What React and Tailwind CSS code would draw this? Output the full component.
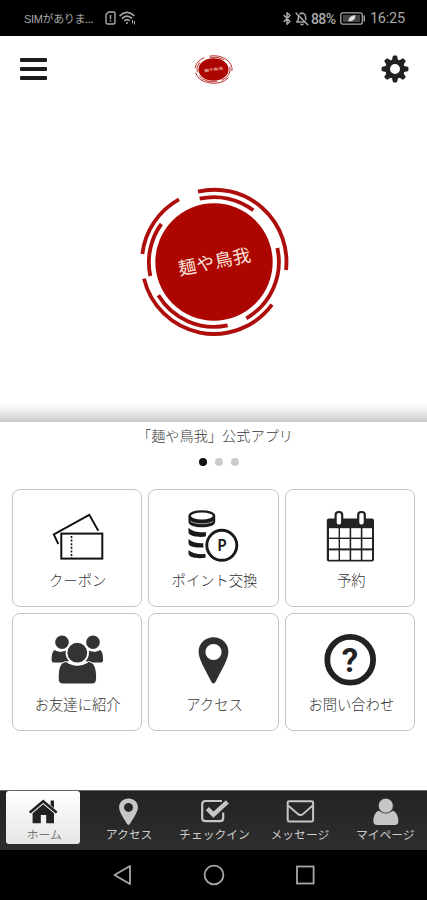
import React, { useState } from "react";
import { LuBluetooth, LuBellOff } from "react-icons/lu";

const rings = [
  // outer
  "M-48 -211 A216 216 0 0 1 216 24",
  "M-105 -188 A216 216 0 0 0 -215 -24",
  "M-210 50 A216 216 0 0 0 174 128",
  // inner
  "M-43 -190 A195 195 0 0 1 118 -155",
  "M-158 -114 A195 195 0 0 0 -191 42",
  "M190 -42 A195 195 0 0 1 97 169",
  "M-167 100 A195 195 0 0 0 41 190",
];

const ShopLogo = ({ className }) => (
  <svg
    viewBox="-228 -228 456 456"
    preserveAspectRatio="none"
    className={className}
  >
    <circle r="176" fill="#ad0500" />
    <g fill="none" stroke="#ad0e0c" strokeWidth="11.5">
      {rings.map((d) => (
        <path key={d} d={d} />
      ))}
    </g>
    <text
      transform="rotate(-11.5)"
      x="2"
      y="19"
      textAnchor="middle"
      fill="#fbe3dc"
      fontSize="54"
      letterSpacing="1.5"
      className="font-['Liberation_Serif','Noto_Sans_CJK_JP',serif]"
    >
      麺や鳥我
    </text>
  </svg>
);

const teeth = [0, 45, 90, 135, 180, 225, 270, 315];

const GearIcon = () => (
  <svg viewBox="-14 -14 28 28" className="size-7">
    <g fill="#222">
      {teeth.map((deg) => (
        <path
          key={deg}
          transform={`rotate(${deg})`}
          d="M-3.2 -8 L-2.2 -12.6 Q-2 -13.4 -1.2 -13.4 H1.2 Q2 -13.4 2.2 -12.6 L3.2 -8 Z"
        />
      ))}
    </g>
    <circle r="7.4" fill="none" stroke="#222" strokeWidth="4.8" />
  </svg>
);

const CouponIcon = () => (
  <svg viewBox="0 0 56 56" className="size-14" fill="none" stroke="#111">
    <path d="M9.3 36 L4.8 26.5 L40.3 6.8 L49.3 22.7" strokeWidth="1.9" />
    <rect x="12.3" y="25.6" width="41" height="25" strokeWidth="2" />
    <path d="M22.5 28 V50" strokeWidth="1.6" strokeDasharray="2 1.6" />
  </svg>
);

const PointIcon = () => (
  <svg viewBox="0 0 56 56" className="size-14">
    <path d="M3.5 8.5 V14 C3.5 21 30.2 21 30.2 14 V8.5 Z" fill="#1a1a1a" />
    <ellipse
      cx="16.85"
      cy="8"
      rx="12.2"
      ry="4.6"
      fill="#fff"
      stroke="#1a1a1a"
      strokeWidth="2.4"
    />
    <path
      d="M5.5 13.2 C10 16.6 23.7 16.6 28.2 13.2"
      fill="none"
      stroke="#fff"
      strokeWidth=".6"
    />
    <g fill="#1a1a1a">
      <path d="M3.5 19.8 C7 23.6 14 24.8 21 24.2 V28.5 C14 29.6 3.5 28.6 3.5 24 Z" />
      <path d="M3.5 31 C7 34.6 13 35.6 19 35.2 V39.4 C12 40 3.5 39.4 3.5 35 Z" />
      <path d="M3.5 42 C7 45.4 14 46.6 20.5 46 V49.8 C13 51 3.5 50 3.5 45.6 Z" />
    </g>
    <circle cx="36.8" cy="37.3" r="18.5" fill="#fff" />
    <circle
      cx="36.8"
      cy="37.3"
      r="15"
      fill="#fff"
      stroke="#1a1a1a"
      strokeWidth="2.9"
    />
    <text
      x="37"
      y="43"
      textAnchor="middle"
      fontSize="15.5"
      fill="#1a1a1a"
      className="font-['Noto_Sans',sans-serif] font-semibold"
    >
      P
    </text>
  </svg>
);

const CalendarIcon = () => (
  <svg viewBox="0 0 56 56" className="size-14">
    <rect x="4.8" y="10.5" width="47.2" height="43" rx="2" fill="#222" />
    <g fill="#fff">
      {[20.2, 31, 42.4].map((y) =>
        [7, 18, 29.2, 40.4].map((x) => (
          <rect key={`${x}-${y}`} x={x} y={y} width="9.6" height="9.4" />
        ))
      )}
    </g>
    <g fill="#fff" stroke="#222" strokeWidth="2.2">
      <rect x="13.6" y="4" width="6.6" height="13.5" rx="3" />
      <rect x="36.2" y="4" width="6.6" height="13.5" rx="3" />
    </g>
  </svg>
);

const FriendsIcon = () => (
  <svg viewBox="0 0 56 56" className="size-14" fill="#333">
    <circle cx="13" cy="10.3" r="6.8" />
    <circle cx="44" cy="10.3" r="6.8" />
    <path d="M5.5 18 C9 20.5 15 20 17 18.6 L20 29 L16 30.6 H5.5 C3.5 30.6 2.6 29.6 2.6 28 C2.6 24 3.2 19.5 5.5 18 Z" />
    <path d="M51.2 18 C47.7 20.5 41.7 20 39.7 18.6 L36.7 29 L40.7 30.6 H51.2 C53.2 30.6 54.1 29.6 54.1 28 C54.1 24 53.5 19.5 51.2 18 Z" />
    <path
      d="M17 29.5 C24 34.5 32.6 34.5 39.7 29.5 C45.5 30.5 47.6 36 47.6 45.5 C47.6 50 46 52 42.5 52 H14.3 C10.7 52 9.2 50 9.2 45.5 C9.2 36 11.2 30.5 17 29.5 Z"
      stroke="#fff"
      strokeWidth="1"
    />
    <circle cx="28.3" cy="20.7" r="10.8" stroke="#fff" strokeWidth="1.8" />
  </svg>
);

const PinIcon = () => (
  <svg viewBox="0 0 56 56" className="size-14" fill="#303030">
    <path
      fillRule="evenodd"
      d="M28.5 5.2 C19.8 5.2 13.6 11.6 13.6 19.8 C13.6 27.5 20.5 38 26.2 49.5 C27.4 52 29.6 52 30.8 49.5 C36.5 38 43.4 27.5 43.4 19.8 C43.4 11.6 37.2 5.2 28.5 5.2 Z M28.5 11.9 A8.1 8.1 0 1 1 28.5 28.1 A8.1 8.1 0 1 1 28.5 11.9 Z"
    />
  </svg>
);

const QuestionIcon = () => (
  <svg viewBox="0 0 56 56" className="size-14">
    <circle
      cx="28.2"
      cy="27.8"
      r="22.9"
      fill="none"
      stroke="#222"
      strokeWidth="5.8"
    />
    <text
      x="28"
      y="39.6"
      textAnchor="middle"
      fontSize="33"
      fill="#222"
      className="font-['Roboto',sans-serif] font-bold"
    >
      ?
    </text>
  </svg>
);

const HomeTabIcon = () => (
  <svg viewBox="0 0 30 28" className="h-7 w-[30px]" fill="#222">
    <path d="M22.6 2.6 H26 V10 L22.6 7 Z" />
    <path d="M15.2 1.4 L29.6 13.8 L27.8 15.6 L15.2 5 L2.6 15.6 L0.8 13.8 Z" />
    <path d="M15.2 6.2 L26 15.2 V25.3 H18.2 V17 H12.8 V25.3 H4.6 V15.2 Z" />
  </svg>
);

const PinTabIcon = () => (
  <svg viewBox="0 0 30 28" className="h-7 w-[30px]" fill="#c6c6c6">
    <path
      fillRule="evenodd"
      d="M15.5 .6 C10 .6 6.1 4.5 6.1 9.4 C6.1 14 10.4 19.5 13.9 25.8 C14.8 27.3 16.2 27.3 17.1 25.8 C20.6 19.5 24.9 14 24.9 9.4 C24.9 4.5 21 .6 15.5 .6 Z M15.5 4.9 A4.5 4.5 0 1 1 15.5 13.9 A4.5 4.5 0 1 1 15.5 4.9 Z"
    />
  </svg>
);

const CheckTabIcon = () => (
  <svg
    viewBox="0 0 30 28"
    className="ml-1 h-7 w-[30px]"
    fill="none"
    stroke="#c6c6c6"
  >
    <path
      d="M22 3 H5.4 C3.4 3 2.2 4.2 2.2 6.2 V20 C2.2 22 3.4 23.2 5.4 23.2 H20 C22 23.2 23.2 22 23.2 20 V14.5"
      strokeWidth="2.2"
    />
    <path d="M7.4 10.6 L13.4 16.6 L27.4 3.8" strokeWidth="4.4" />
  </svg>
);

const MailTabIcon = () => (
  <svg
    viewBox="0 0 30 28"
    className="ml-0.5 h-7 w-[30px]"
    fill="none"
    stroke="#c6c6c6"
  >
    <rect x="2.7" y="3.2" width="25.4" height="20.2" rx="1.4" strokeWidth="2" />
    <path
      d="M3.4 7.8 L12.6 15.8 C14.4 17.4 16.4 17.4 18.2 15.8 L27.4 7.8"
      strokeWidth="1.8"
    />
  </svg>
);

const UserTabIcon = () => (
  <svg viewBox="0 0 30 28" className="ml-0.5 h-7 w-[30px]" fill="#c6c6c6">
    <path d="M9 12.8 C12 15.6 19.6 15.6 22.6 12.8 C26.4 13.8 28.4 18 28.4 23.6 C28.4 25.8 27 27 25 27 H6.6 C4.6 27 3.4 25.8 3.4 23.6 C3.4 18 5.2 13.8 9 12.8 Z" />
    <circle cx="15.8" cy="7.7" r="7.5" stroke="#2a2a2a" strokeWidth=".8" />
  </svg>
);

const menuItems = [
  { label: "クーポン", icon: CouponIcon },
  { label: "ポイント交換", icon: PointIcon },
  { label: "予約", icon: CalendarIcon },
  { label: "お友達に紹介", icon: FriendsIcon },
  { label: "アクセス", icon: PinIcon },
  { label: "お問い合わせ", icon: QuestionIcon },
];

const tabs = [
  { label: "ホーム", icon: HomeTabIcon },
  { label: "アクセス", icon: PinTabIcon },
  { label: "チェックイン", icon: CheckTabIcon },
  { label: "メッセージ", icon: MailTabIcon },
  { label: "マイページ", icon: UserTabIcon },
];

const StatusBar = () => (
  <div className="flex h-9 items-center justify-between bg-black pl-6 pr-[22px] text-[#a8a8a8]">
    <div className="flex items-center">
      <span className="w-[81px] whitespace-nowrap text-[11px] leading-4 tracking-[-0.35px]">
        <span className="font-['Liberation_Sans',sans-serif]">SIM</span>
        がありま...
      </span>
      <svg
        viewBox="0 0 11 14"
        className="h-3.5 w-[11px]"
        fill="none"
        stroke="currentColor"
        strokeWidth="1.4"
      >
        <path d="M3.5 1 H8.5 Q10 1 10 2.5 V11.5 Q10 13 8.5 13 H2.5 Q1 13 1 11.5 V3.5 Z" />
        <path d="M5.5 4 V8 M5.5 9 V10.5" />
      </svg>
      <svg
        viewBox="0 0 17 14"
        className="ml-[3px] h-3.5 w-[17px]"
        fill="none"
        stroke="currentColor"
        strokeWidth="1.7"
      >
        <path d="M.6 4.8 Q8 -1.9 15.4 4.8 M3 7.5 Q8 2.9 13 7.5 M5.3 10 Q8 7.4 10.7 10" />
        <circle cx="8" cy="12" r="1" fill="currentColor" stroke="none" />
        <path d="M13.5 9 V12.5 M15.5 10 V13.5" strokeWidth="1" />
      </svg>
    </div>
    <div className="flex items-center pt-px font-['Roboto',sans-serif] text-sm">
      <LuBluetooth className="h-[15px] w-3.5" strokeWidth={2.6} />
      <LuBellOff className="ml-px size-3.5" strokeWidth={2.6} />
      <span className="ml-0.5 w-[27px] font-medium tracking-[-0.6px]">
        88%
      </span>
      <svg viewBox="0 0 26 13" className="ml-0.5 h-[13px] w-[26px]">
        <rect
          x=".8"
          y=".8"
          width="21.5"
          height="11.4"
          rx="2"
          fill="none"
          stroke="#a8a8a8"
          strokeWidth="1.3"
        />
        <rect x="3" y="3" width="17" height="7" fill="#444" />
        <path d="M8.5 9.5 Q8 4 15.5 3 Q15.5 9.5 8.5 9.5 Z" fill="#e0e0e0" />
        <path d="M24.3 3.5 V9.5" stroke="#a8a8a8" strokeWidth="1.4" />
      </svg>
      <span className="ml-[3px] w-9 text-right text-[14.5px] leading-4 tracking-[-0.2px]">
        16:25
      </span>
    </div>
  </div>
);

const Header = () => (
  <header className="flex h-[66px] items-center justify-between pl-5 pr-[18px]">
    <button className="flex w-[27px] flex-col gap-[4.6px]">
      <span className="h-[4.4px] w-full rounded-[1px] bg-[#1c1c1c]" />
      <span className="h-[4.4px] w-full rounded-[1px] bg-[#1c1c1c]" />
      <span className="h-[4.4px] w-full rounded-[1px] bg-[#1c1c1c]" />
    </button>
    <ShopLogo className="mr-0.5 h-[29px] w-[39px]" />
    <button>
      <GearIcon />
    </button>
  </header>
);

const App = () => {
  const [activeTab, setActiveTab] = useState(0);
  const [slide, setSlide] = useState(0);

  return (
    <div className="flex h-[900px] w-full flex-col overflow-hidden bg-white font-['Noto_Sans_CJK_JP',sans-serif]">
      <StatusBar />
      <Header />

      {/* slider */}
      <section className="flex h-[300px] flex-col items-center pt-[84px]">
        <ShopLogo className="size-[152px]" />
      </section>
      <div className="h-5 shrink-0 bg-linear-to-b from-white via-[#ebebeb] to-[#c8c8c8]" />

      <section className="flex h-[67px] flex-col items-center pt-[3px]">
        <p className="pl-[3px] text-[14.2px] leading-5 font-light text-[#3a3a3a]">
          「麺や鳥我」公式アプリ
        </p>
        <div className="mt-[13px] flex gap-2 pl-[11px]">
          {[0, 1, 2].map((i) => (
            <button
              key={i}
              onClick={() => setSlide(i)}
              className={`size-2 rounded-full ${
                slide === i ? "bg-[#111]" : "bg-[#cacaca]"
              }`}
            />
          ))}
        </div>
      </section>

      {/* menu */}
      <main className="grid h-[301px] grid-cols-3 content-start gap-x-[6.5px] gap-y-[6px] pl-[11.5px] pr-[11.5px]">
        {menuItems.map(({ label, icon: Icon }) => (
          <button
            key={label}
            className="flex h-[118px] flex-col items-center rounded-lg border-[1.5px] border-[#c6c6c6] pt-[18px]"
          >
            <Icon />
            <span className="mt-1.5 pl-0.5 text-[14.3px] leading-5 font-light text-[#333]">
              {label}
            </span>
          </button>
        ))}
      </main>

      <nav className="grid h-[60px] grid-cols-5 border-t border-[#666] bg-linear-to-b from-[#232323] to-[#2e2e2e]">
        {tabs.map(({ label, icon: Icon }, i) => (
          <button
            key={label}
            onClick={() => setActiveTab(i)}
            className={`flex flex-col items-center whitespace-nowrap pt-[7px] text-[11.8px] leading-4 ${
              activeTab === i
                ? "mb-[6px] ml-1.5 mr-[5px] rounded-[3px] bg-linear-to-b from-white to-[#e6e6e6] text-[#777]"
                : "text-[#cfcfcf]"
            }`}
          >
            <Icon />
            <span className="pl-0.5">{label}</span>
          </button>
        ))}
      </nav>

      {/* android buttons */}
      <div className="flex flex-1 items-center justify-center gap-[70px] bg-black">
        <svg
          viewBox="0 0 21 22"
          className="h-[22px] w-[21px]"
          fill="none"
          stroke="#a8a8a8"
          strokeWidth="1.8"
        >
          <path d="M18 2 V20 L2.5 11 Z" strokeLinejoin="round" />
        </svg>
        <svg
          viewBox="0 0 22 22"
          className="size-[22px]"
          fill="none"
          stroke="#a8a8a8"
          strokeWidth="1.8"
        >
          <circle cx="11" cy="11" r="9.4" />
        </svg>
        <svg
          viewBox="0 0 21 22"
          className="h-[22px] w-[21px]"
          fill="none"
          stroke="#a8a8a8"
          strokeWidth="1.8"
        >
          <rect x="2" y="2.5" width="16.6" height="17" />
        </svg>
      </div>
    </div>
  );
};

export default App;
